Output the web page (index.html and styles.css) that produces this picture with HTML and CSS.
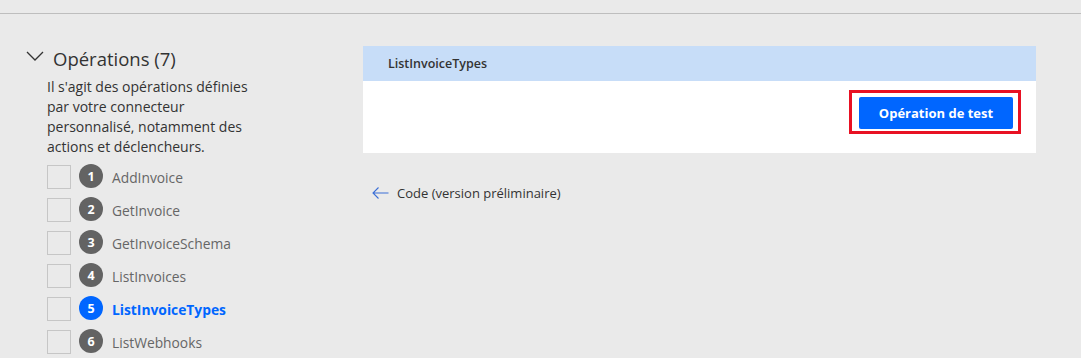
FILE: index.html
```html
<!DOCTYPE html>
<html lang="fr">
<head>
  <meta charset="UTF-8" />
  <title>Opérations</title>
  <link rel="stylesheet" href="styles.css">
</head>
<body>
  <div class="topbar"></div>

  <div class="main">
    <div class="sidebar">
      <h2 class="ops-title">
        <svg class="chevron" width="18" height="10" viewBox="0 0 18 10">
          <polyline points="1,1 9,9 17,1" fill="none" stroke="#333" stroke-width="1.3"/>
        </svg>
        Opérations (7)
      </h2>
      <p class="ops-desc">Il s'agit des opérations définies par votre connecteur personnalisé, notamment des actions et déclencheurs.</p>

      <ul class="ops">
        <li><span class="check"></span><span class="num">1</span><span class="name">AddInvoice</span></li>
        <li><span class="check"></span><span class="num">2</span><span class="name">GetInvoice</span></li>
        <li><span class="check"></span><span class="num">3</span><span class="name">GetInvoiceSchema</span></li>
        <li><span class="check"></span><span class="num">4</span><span class="name">ListInvoices</span></li>
        <li class="active"><span class="check"></span><span class="num">5</span><span class="name">ListInvoiceTypes</span></li>
        <li><span class="check"></span><span class="num">6</span><span class="name">ListWebhooks</span></li>
      </ul>
    </div>

    <div class="content">
      <div class="card">
        <div class="card-head">ListInvoiceTypes</div>
        <div class="card-body">
          <div class="highlight">
            <button class="test-btn">Opération de test</button>
          </div>
        </div>
      </div>

      <div class="code-link">
        <svg width="17" height="12" viewBox="0 0 17 12">
          <path d="M16.5 6H1M6.5 0.5L1 6l5.5 5.5" fill="none" stroke="#3b6fd6" stroke-width="1.1"/>
        </svg>
        <span>Code (version préliminaire)</span>
      </div>
    </div>
  </div>
</body>
</html>
```

FILE: styles.css
```css
body {
  margin: 0;
  background: #eaeaea;
  font-family: "Open Sans", "Noto Sans", sans-serif;
  color: #333;
  height: 358px;
  overflow: hidden;
}

.topbar {
  height: 13px;
  border-bottom: 1px solid #bebebe;
}

.main {
  display: flex;
}

/* left column */
.sidebar {
  width: 363px;
  padding-left: 26px;
  box-sizing: border-box;
}

.ops-title {
  display: flex;
  align-items: center;
  gap: 9px;
  margin: 32px 0 0;
  font-size: 18.5px;
  font-weight: normal;
  line-height: 26px;
  color: #333;
}

.chevron {
  margin-top: -6px;
}

.ops-desc {
  margin: 5px 0 0 21px;
  width: 220px;
  font-size: 14px;
  line-height: 20px;
  color: #333;
}

.ops {
  list-style: none;
  margin: 8px 0 0 21px;
  padding: 0;
}

.ops li {
  display: flex;
  align-items: center;
  height: 24px;
  margin-bottom: 9px;
}

.check {
  width: 22px;
  height: 22px;
  border: 1px solid #c6c6c6;
  margin-right: 8px;
}

.num {
  width: 24px;
  height: 24px;
  border-radius: 50%;
  background: #636363;
  color: #fff;
  font-size: 12.5px;
  font-weight: bold;
  display: flex;
  align-items: center;
  justify-content: center;
  margin-right: 9px;
  margin-top: -2px;
}

.name {
  font-size: 13.8px;
  color: #666;
}

.ops li.active .num {
  background: #0066ff;
}

.ops li.active .name {
  color: #0066ff;
  font-weight: bold;
}

/* right column */
.content {
  width: 673px;
}

.card {
  margin-top: 32px;
  background: #fff;
}

.card-head {
  height: 35px;
  line-height: 35px;
  padding-left: 25px;
  background: #c7ddf8;
  font-size: 12.5px;
  font-weight: 600;
  color: #333;
}

.card-body {
  height: 72px;
  box-sizing: border-box;
  display: flex;
  justify-content: flex-end;
  align-items: flex-start;
  padding: 9px 15px 0 0;
}

.highlight {
  border: 3px solid #e81123;
  padding: 4px 5px 2px 7px;
}

.test-btn {
  width: 154px;
  height: 32px;
  border: none;
  border-radius: 2px;
  background: #0066ff;
  color: #fff;
  font-family: inherit;
  font-size: 13px;
  font-weight: bold;
  display: block;
}

.code-link {
  display: flex;
  align-items: center;
  gap: 8px;
  margin: 31px 0 0 9px;
  font-size: 13px;
  color: #333;
}
```
